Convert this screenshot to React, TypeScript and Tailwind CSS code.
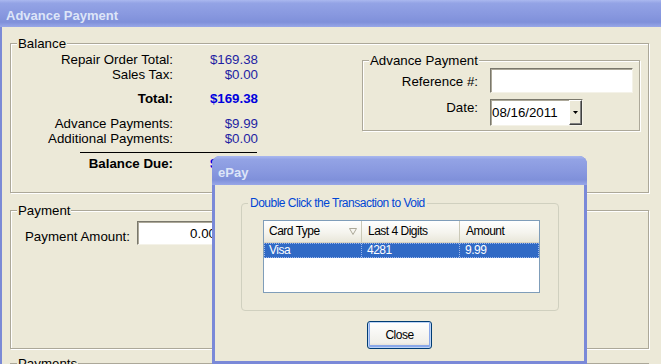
const titleBar =
  "bg-[linear-gradient(to_bottom,#aab8ef_0%,#93a3e5_12%,#8898df_55%,#7f90da_82%,#98a7e8_100%)]";
const etched = "border border-[#aca899] shadow-[inset_1px_1px_0_#fff,1px_1px_0_#fff]";
const sunken =
  "border border-t-[#7a786c] border-l-[#7a786c] border-r-[#f4f2e8] border-b-[#f4f2e8] shadow-[inset_1px_1px_0_#aca899] bg-white";

function Row({
  label,
  value,
  className,
  valueClass,
}: {
  label: string;
  value: string;
  className: string;
  valueClass: string;
}) {
  return (
    <div className={`flex ${className}`}>
      <span className="w-[162px] text-right">{label}</span>
      <span className={`w-[85px] text-right ${valueClass}`}>{value}</span>
    </div>
  );
}

function EPayDialog() {
  return (
    <div className="absolute left-[212px] top-[156px] flex h-[208px] w-[375px] flex-col rounded-t-[8px] bg-[#7a89d8] px-[3px] pb-[3px] text-[12px] tracking-[-0.5px]">
      <div
        className={`-mx-[3px] flex h-[29px] items-center rounded-t-[8px] pl-[6px] pt-[4px] text-[13px] font-bold tracking-normal text-[#dde5f8] ${titleBar}`}
      >
        ePay
      </div>
      <div className="flex flex-1 flex-col bg-[#ece9d8]">
        <fieldset className="ml-[26px] mt-[11px] h-[115px] w-[318px] rounded-[4px] border border-[#d0d0bf]">
          <legend className="ml-[6px] px-[2px] leading-[14px] text-[#0046d5]">
            Double Click the Transaction to Void
          </legend>
          <div className="ml-[21px] mt-[10px] flex h-[73px] w-[277px] flex-col border border-[#7f9db9] bg-white">
            <div className="flex h-[22px] border-b border-[#d6d2c2] bg-[linear-gradient(to_bottom,#ffffff,#f5f4ee_55%,#e9e7da)]">
              <div className="flex w-[98px] items-center justify-between border-r border-[#cbc9b8] pl-[5px] pr-[4px]">
                <span>Card Type</span>
                <svg width="8" height="7" viewBox="0 0 8 7">
                  <path d="M0.5 0.5 H7.5 L4 6.5 Z" fill="none" stroke="#aca899" />
                </svg>
              </div>
              <div className="flex w-[98px] items-center border-r border-[#cbc9b8] pl-[6px]">
                Last 4 Digits
              </div>
              <div className="flex flex-1 items-center pl-[6px]">Amount</div>
            </div>
            <div className="flex h-[15px] border border-dotted border-[#9fb8ea] bg-[#316ac5] leading-[13px] text-white">
              <span className="w-[97px] border-r border-dotted border-[#9fb8ea] pl-[4px]">Visa</span>
              <span className="w-[98px] border-r border-dotted border-[#9fb8ea] pl-[5px]">4281</span>
              <span className="flex-1 pl-[5px]">9.99</span>
            </div>
          </div>
        </fieldset>
        <button className="mt-[10px] h-[28px] w-[65px] self-center rounded-[3px] border border-[#003c74] bg-[linear-gradient(to_bottom,#ffffff,#f0efe9_80%,#d8d3c6)] shadow-[inset_0_0_0_1px_#bcd4f6,inset_0_-1px_0_2px_#8aa8ea]">
          Close
        </button>
      </div>
    </div>
  );
}

export default function App() {
  return (
    <div className="relative h-[364px] w-[661px] overflow-hidden bg-[#ece9d8] font-['Liberation_Sans',Arial,sans-serif] text-[13.3px] leading-[15px] text-black">
      <div
        className={`flex h-[27px] items-center pl-[6px] pt-[3px] text-[13px] font-bold text-[#dde5f8] ${titleBar}`}
      >
        Advance Payment
      </div>

      <div className="h-[337px] border-l-2 border-[#7b8ad6] pl-[8px] pt-[9px]">
        <fieldset className={`h-[157px] w-[639px] ${etched}`}>
          <legend className="ml-[6px] bg-[#ece9d8] px-[1px]">Balance</legend>
          <div className="flex">
            <div className="pt-[1px]">
              <Row label="Repair Order Total:" value="$169.38" className="" valueClass="text-[#1f1fa3]" />
              <Row label="Sales Tax:" value="$0.00" className="" valueClass="text-[#1f1fa3]" />
              <Row
                label="Total:"
                value="$169.38"
                className="mt-[9px] font-bold"
                valueClass="text-[#0000dd]"
              />
              <Row label="Advance Payments:" value="$9.99" className="mt-[10px]" valueClass="text-[#1f1fa3]" />
              <Row label="Additional Payments:" value="$0.00" className="" valueClass="text-[#1f1fa3]" />
              <div className="ml-[69px] mt-[6px] h-px w-[177px] bg-black" />
              <Row
                label="Balance Due:"
                value="$159.39"
                className="mt-[3px] font-bold"
                valueClass="text-[#0000dd]"
              />
            </div>

            <fieldset className={`ml-auto mr-[8px] mt-[2px] h-[78px] w-[278px] ${etched}`}>
              <legend className="ml-[6px] bg-[#ece9d8] px-[1px]">Advance Payment</legend>
              <div className="flex">
                <span className="w-[115px] pt-[6px] text-right">Reference #:</span>
                <div className={`ml-[12px] h-[25px] w-[143px] ${sunken}`} />
              </div>
              <div className="mt-[6px] flex">
                <span className="w-[115px] pt-[1px] text-right">Date:</span>
                <div className={`ml-[12px] flex h-[27px] w-[93px] items-center ${sunken}`}>
                  <span className="flex-1 pl-[1px]">08/16/2011</span>
                  <div className="flex h-[25px] w-[13px] items-center justify-center border border-t-[#fff] border-l-[#fff] border-r-[#404040] border-b-[#404040] bg-[#ece9d8] shadow-[inset_-1px_-1px_0_#808080]">
                    <svg width="5" height="3" viewBox="0 0 5 3">
                      <path d="M0 0 H5 L2.5 3 Z" fill="#000" />
                    </svg>
                  </div>
                </div>
              </div>
            </fieldset>
          </div>
        </fieldset>

        <fieldset className={`mt-[10px] h-[146px] w-[639px] ${etched}`}>
          <legend className="ml-[6px] bg-[#ece9d8] px-[1px]">Payment</legend>
          <div className="mt-[3px] flex">
            <span className="ml-[14px] mt-[8px] w-[112px]">Payment Amount:</span>
            <div className={`flex h-[24px] w-[83px] items-center justify-end pr-[3px] ${sunken}`}>0.00</div>
          </div>
        </fieldset>

        <fieldset className={`mt-[7px] h-[40px] w-[639px] ${etched}`}>
          <legend className="ml-[6px] bg-[#ece9d8] px-[1px]">Payments</legend>
        </fieldset>
      </div>

      <EPayDialog />
    </div>
  );
}
